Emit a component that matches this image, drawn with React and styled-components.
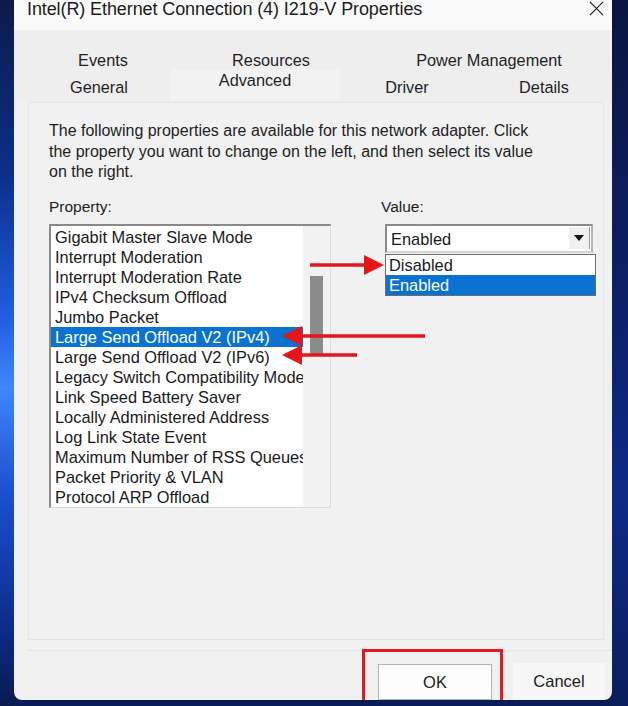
import React from "react";
import styled, { createGlobalStyle } from "styled-components";

const GlobalStyle = createGlobalStyle`
  html, body {
    margin: 0;
    padding: 0;
  }
  body {
    width: 628px;
    height: 706px;
    overflow: hidden;
    background: #0a1c55;
    font-family: "Liberation Sans", Arial, sans-serif;
    color: #1a1a1a;
  }
`;

const properties = [
  "Gigabit Master Slave Mode",
  "Interrupt Moderation",
  "Interrupt Moderation Rate",
  "IPv4 Checksum Offload",
  "Jumbo Packet",
  "Large Send Offload V2 (IPv4)",
  "Large Send Offload V2 (IPv6)",
  "Legacy Switch Compatibility Mode",
  "Link Speed Battery Saver",
  "Locally Administered Address",
  "Log Link State Event",
  "Maximum Number of RSS Queues",
  "Packet Priority & VLAN",
  "Protocol ARP Offload",
];

const backTabs = [
  { label: "Events", width: 140 },
  { label: "Resources", width: 196 },
  { label: "Power Management", width: 240 },
];

const frontTabs = [
  { label: "General", width: 142 },
  { label: "Advanced", width: 170, active: true },
  { label: "Driver", width: 134 },
  { label: "Details", width: 140 },
];

const App = () => {
  return (
    <Screen>
      <GlobalStyle />
      <Wallpaper side="left" />
      <Window>
        <TitleBar>
          <Title>Intel(R) Ethernet Connection (4) I219-V Properties</Title>
          <CloseIcon viewBox="0 0 16 16">
            <path d="M1 1 L15 15 M15 1 L1 15" stroke="#222" strokeWidth="1.3" />
          </CloseIcon>
        </TitleBar>

        <TabStrip>
          <TabRow offset={19}>
            {backTabs.map(t => (
              <Tab key={t.label} w={t.width}>
                {t.label}
              </Tab>
            ))}
          </TabRow>
          <TabRow offset={14}>
            {frontTabs.map(t => (
              <Tab key={t.label} w={t.width} active={t.active}>
                {t.label}
              </Tab>
            ))}
          </TabRow>
        </TabStrip>

        <Page>
          <Intro>
            The following properties are available for this network adapter. Click
            <br />
            the property you want to change on the left, and then select its value
            <br />
            on the right.
          </Intro>

          <Columns>
            <Column>
              <Label>Property:</Label>
              <ListBox>
                <Items>
                  {properties.map((p, i) => (
                    <Item key={p} selected={i === 5}>
                      {p}
                    </Item>
                  ))}
                </Items>
                <ScrollTrack>
                  <ScrollThumb />
                </ScrollTrack>
              </ListBox>
            </Column>

            <Column>
              <Label indent={-4}>Value:</Label>
              <Combo>
                <ComboText>Enabled</ComboText>
                <ComboButton>
                  <svg width="10" height="6" viewBox="0 0 10 6">
                    <path d="M0 0 H10 L5 6 Z" fill="#111" />
                  </svg>
                </ComboButton>
                <DropList>
                  <DropItem>Disabled</DropItem>
                  <DropItem selected>Enabled</DropItem>
                </DropList>
              </Combo>
            </Column>
          </Columns>
        </Page>

        <Footer>
          <Highlight>
            <Button primary>OK</Button>
          </Highlight>
          <Button>Cancel</Button>
        </Footer>

        <Arrows viewBox="0 0 598 706" width="598" height="706">
          <g fill="#e3161b" stroke="#e3161b">
            <line x1="296" y1="265" x2="352" y2="265" strokeWidth="3.5" />
            <polygon points="350,255 370,265 350,275" stroke="none" />
            <line x1="286" y1="336" x2="411" y2="336" strokeWidth="3.5" />
            <polygon points="288,326 268,336 288,346" stroke="none" />
            <line x1="286" y1="355" x2="343" y2="355" strokeWidth="3.5" />
            <polygon points="288,345 268,355 288,365" stroke="none" />
          </g>
        </Arrows>
      </Window>
      <Wallpaper side="right" />
    </Screen>
  );
};

const Screen = styled.div`
  width: 628px;
  height: 706px;
  display: flex;
  overflow: hidden;
  background: #0a1c55;
`;

const Wallpaper = styled.div`
  width: ${p => (p.side === "left" ? 14 : 16)}px;
  flex: none;
  background: ${p =>
    p.side === "left"
      ? "linear-gradient(180deg, #0b1a48 0%, #0d2f8c 25%, #1f5fe0 45%, #3f86ff 55%, #1a4fcf 70%, #0c2a85 90%, #0a1a4f 100%)"
      : "linear-gradient(180deg, #0a1640 0%, #0c1f66 40%, #0e2a86 70%, #0b1d5c 100%)"};
`;

const Window = styled.div`
  position: relative;
  width: 598px;
  height: 700px;
  flex: none;
  display: flex;
  flex-direction: column;
  background: #f0f0f0;
  border-radius: 0 0 8px 8px;
  overflow: hidden;
`;

const TitleBar = styled.div`
  height: 30px;
  flex: none;
  display: flex;
  align-items: flex-start;
  justify-content: space-between;
  padding: 0 8px 0 13px;
  background: #fafafa;
`;

const Title = styled.div`
  font-size: 18px;
  line-height: 18px;
  color: #1c1c1c;
  letter-spacing: -0.1px;
`;

const CloseIcon = styled.svg`
  width: 15px;
  height: 15px;
  margin-top: 1px;
`;

const TabStrip = styled.div`
  height: 70px;
  flex: none;
  display: flex;
  flex-direction: column;
  justify-content: flex-end;
  padding-bottom: 2px;
  background: #eeeeee;
`;

const TabRow = styled.div`
  display: flex;
  padding-left: ${p => p.offset}px;
  height: 27px;
`;

const Tab = styled.div`
  width: ${p => p.w}px;
  flex: none;
  display: flex;
  align-items: ${p => (p.active ? "flex-start" : "center")};
  justify-content: center;
  font-size: 16.3px;
  color: #1f1f1f;
  line-height: 22px;
  background: ${p => (p.active ? "#f2f2f2" : "transparent")};
  border-radius: 3px 3px 0 0;
  margin-top: ${p => (p.active ? -4 : 0)}px;
`;

const Page = styled.div`
  margin: 0 8px 0 14px;
  height: 538px;
  flex: none;
  padding: 18px 0 0 20px;
  box-sizing: border-box;
  border: 1px solid #e4e4e4;
  background: #f1f1f1;
`;

const Intro = styled.p`
  margin: 0;
  font-size: 16px;
  line-height: 20.5px;
  color: #1e1e1e;
`;

const Columns = styled.div`
  display: grid;
  grid-template-columns: 282px 212px;
  column-gap: 54px;
  margin-top: 14px;
`;

const Column = styled.div`
  position: relative;
  display: flex;
  flex-direction: column;
`;

const Label = styled.div`
  font-size: 15.5px;
  line-height: 20px;
  color: #222;
  margin-left: ${p => p.indent || 0}px;
  height: 27px;
`;

const ListBox = styled.div`
  height: 284px;
  display: flex;
  background: #fff;
  border-top: 2px solid #8a8a8a;
  border-left: 2px solid #8a8a8a;
  border-right: 1px solid #dcdcdc;
  border-bottom: 1px solid #dcdcdc;
  box-sizing: border-box;
  overflow: hidden;
`;

const Items = styled.div`
  flex: 1;
  min-width: 0;
  padding-top: 1px;
  overflow: hidden;
`;

const Item = styled.div`
  height: 20px;
  line-height: 20px;
  padding-left: 4px;
  font-size: 16.4px;
  white-space: nowrap;
  color: ${p => (p.selected ? "#fff" : "#1a1a1a")};
  background: ${p => (p.selected ? "#0a72d1" : "transparent")};
`;

const ScrollTrack = styled.div`
  width: 27px;
  flex: none;
  background: #f2f2f2;
  padding: 50px 0 0 7px;
  box-sizing: border-box;
`;

const ScrollThumb = styled.div`
  width: 13px;
  height: 80px;
  background: #8b8b8b;
`;

const Combo = styled.div`
  position: relative;
  width: 208px;
  height: 29px;
  display: flex;
  align-items: center;
  background: #fff;
  border-top: 2px solid #8a8a8a;
  border-left: 2px solid #8a8a8a;
  border-right: 2px solid #b5b5b5;
  border-bottom: 2px solid #d6d6d6;
  box-sizing: border-box;
`;

const ComboText = styled.div`
  flex: 1;
  padding-left: 4px;
  padding-top: 2px;
  font-size: 16.4px;
  color: #1a1a1a;
`;

const ComboButton = styled.div`
  width: 20px;
  height: 22px;
  display: flex;
  align-items: center;
  justify-content: center;
  background: #f0f0f0;
  border-right: 1px solid #999;
  margin-right: 1px;
`;

const DropList = styled.div`
  position: absolute;
  top: 28px;
  left: -2px;
  width: 211px;
  background: #fff;
  border: 1px solid #6d6d6d;
  box-sizing: border-box;
`;

const DropItem = styled.div`
  height: 20px;
  line-height: 20px;
  padding-left: 3px;
  font-size: 16.4px;
  color: ${p => (p.selected ? "#fff" : "#1a1a1a")};
  background: ${p => (p.selected ? "#0a72d1" : "#fff")};
`;

const Footer = styled.div`
  flex: 1;
  margin: 10px 0 0 14px;
  border-top: 1px solid #e3e3e3;
  display: flex;
  align-items: flex-start;
  padding-left: 334px;
  gap: 10px;
`;

const Highlight = styled.div`
  border: 3px solid #e01b1f;
  padding: 12px 8px 4px 13px;
  margin-top: -2px;
`;

const Button = styled.div`
  width: ${p => (p.primary ? 114 : 92)}px;
  height: 36px;
  display: flex;
  align-items: center;
  justify-content: center;
  font-size: 16.5px;
  color: #1c1c1c;
  background: ${p => (p.primary ? "#fdfdfd" : "#f7f7f7")};
  border: 1px solid ${p => (p.primary ? "#a9b6c2" : "transparent")};
  box-sizing: border-box;
  margin-top: ${p => (p.primary ? 0 : 12)}px;
`;

const Arrows = styled.svg`
  position: absolute;
  top: 0;
  left: 0;
  pointer-events: none;
`;

export default App;
